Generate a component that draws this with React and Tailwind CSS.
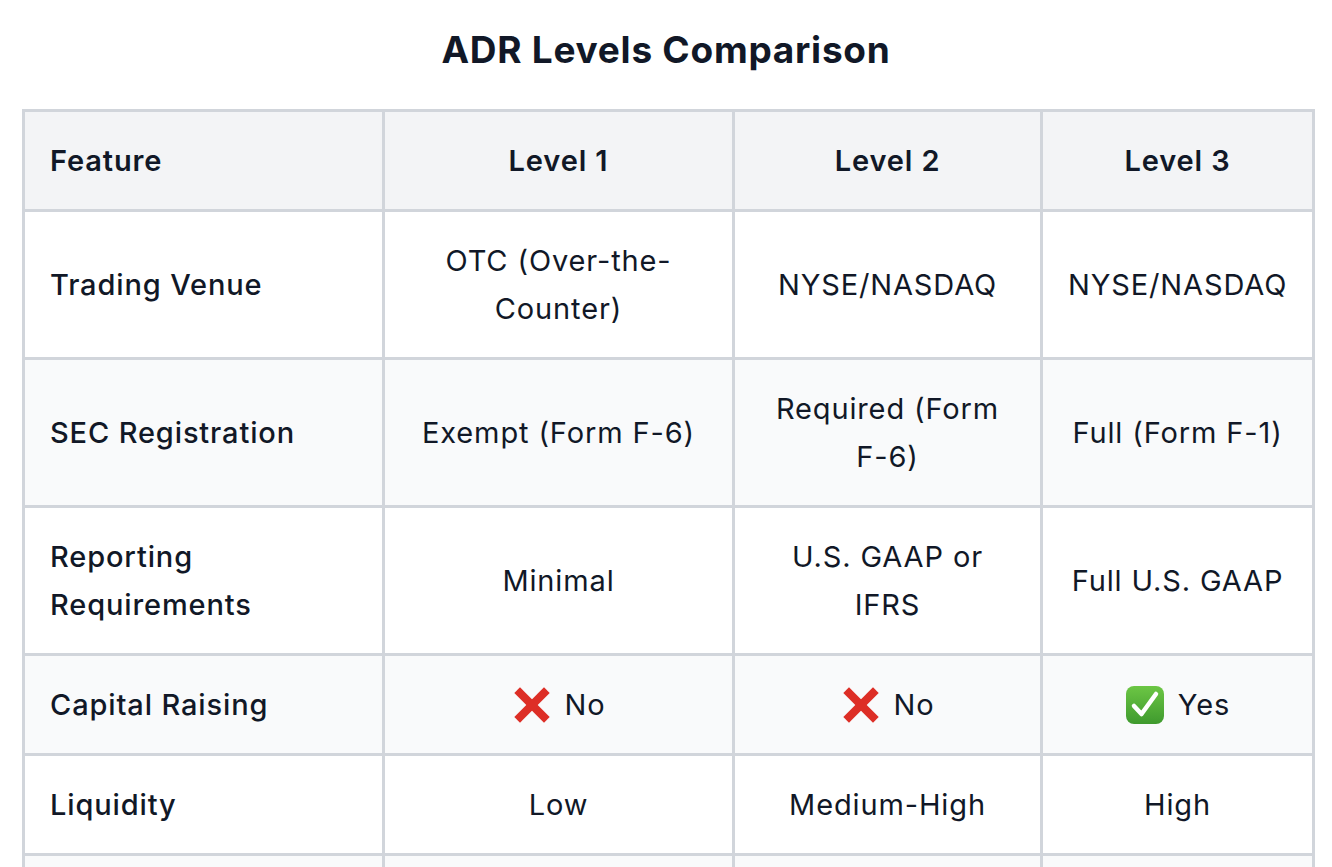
import React from "react";

const rows = [
  { feature: "Trading Venue", l1: ["OTC (Over-the-", "Counter)"], l2: ["NYSE/NASDAQ"], l3: ["NYSE/NASDAQ"] },
  { feature: "SEC Registration", l1: ["Exempt (Form F-6)"], l2: ["Required (Form", "F-6)"], l3: ["Full (Form F-1)"] },
  { feature: ["Reporting", "Requirements"], l1: ["Minimal"], l2: ["U.S. GAAP or", "IFRS"], l3: ["Full U.S. GAAP"] },
  { feature: "Capital Raising", l1: "no", l2: "no", l3: "yes" },
  { feature: "Liquidity", l1: ["Low"], l2: ["Medium-High"], l3: ["High"] },
  { feature: "Listing Cost", l1: ["Low"], l2: ["Moderate"], l3: ["High"] },
];

function CrossMark() {
  return (
    <svg width="40" height="40" viewBox="0 0 40 40" className="shrink-0">
      <g fill="#dd2e26">
        <rect x="16" y="-1" width="8" height="42" transform="rotate(45 20 20)" />
        <rect x="16" y="-1" width="8" height="42" transform="rotate(-45 20 20)" />
      </g>
    </svg>
  );
}

function CheckMark() {
  return (
    <svg width="40" height="40" viewBox="0 0 40 40" className="shrink-0">
      <defs>
        <linearGradient id="chk" x1="0" y1="0" x2="0" y2="1">
          <stop offset="0" stopColor="#6cc644" />
          <stop offset="1" stopColor="#3f9a2e" />
        </linearGradient>
      </defs>
      <rect x="1" y="1" width="38" height="38" rx="8" fill="url(#chk)" />
      <path d="M9 21 L16.5 29 L31 9" fill="none" stroke="#fff" strokeWidth="4.5" strokeLinecap="round" strokeLinejoin="round" />
    </svg>
  );
}

function Cell({ value }) {
  if (value === "no" || value === "yes") {
    return (
      <div className="flex h-12 items-center justify-center gap-[13px]">
        {value === "no" ? <CrossMark /> : <CheckMark />}
        <span>{value === "no" ? "No" : "Yes"}</span>
      </div>
    );
  }
  const lines = Array.isArray(value) ? value : [value];
  return lines.map((l, i) => (
    <span key={i} className="block whitespace-nowrap">{l}</span>
  ));
}

export default function App() {
  const cell = "border-[3px] border-[#d1d5db] px-[25px] py-[24.5px] align-middle";
  return (
    <div className="min-h-screen bg-white text-[#111827] font-['Inter','Liberation_Sans',sans-serif] px-[22px]">
      <h2 className="pt-[30px] pb-[39px] text-center text-[37px] leading-10 font-bold tracking-[0.02em]">
        ADR Levels Comparison
      </h2>

      <table className="table-fixed border-collapse w-[1290px] text-[29px] leading-[48px] tracking-[0.03em]">
        <colgroup>
          <col className="w-[360px]" />
          <col className="w-[350px]" />
          <col className="w-[308px]" />
          <col className="w-[272px]" />
        </colgroup>
        <thead>
          <tr className="bg-[#f3f4f6]">
            <th className={`${cell} text-left font-semibold`}>Feature</th>
            <th className={`${cell} text-center font-semibold`}>Level 1</th>
            <th className={`${cell} text-center font-semibold`}>Level 2</th>
            <th className={`${cell} text-center font-semibold`}>Level 3</th>
          </tr>
        </thead>
        <tbody>
          {rows.map((r, i) => (
            <tr key={i} className={i % 2 === 1 ? "bg-[#f9fafb]" : "bg-white"}>
              <td className={`${cell} text-left font-medium`}>
                <Cell value={r.feature} />
              </td>
              <td className={`${cell} text-center`}>
                <Cell value={r.l1} />
              </td>
              <td className={`${cell} text-center`}>
                <Cell value={r.l2} />
              </td>
              <td className={`${cell} text-center`}>
                <Cell value={r.l3} />
              </td>
            </tr>
          ))}
        </tbody>
      </table>
    </div>
  );
}
